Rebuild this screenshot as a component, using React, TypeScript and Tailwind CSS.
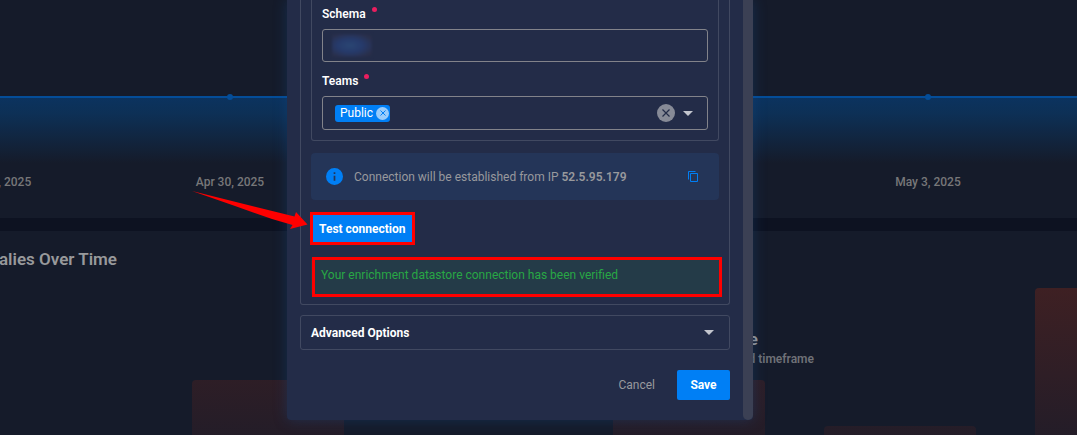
import { useState } from "react";

const points = [
  { x: -3, label: "Apr 29, 2025" },
  { x: 230, label: "Apr 30, 2025" },
  { x: 928, label: "May 3, 2025" },
];

const bars = [
  { x: 192, y: 149 },
  { x: 613, y: 149 },
  { x: 824, y: 195 },
  { x: 1035, y: 57 },
];

function TrendCard() {
  return (
    <section className="h-[218px] shrink-0 bg-[#151b2a]">
      <svg className="block h-full w-full">
        <defs>
          <linearGradient id="area" x1="0" y1="0" x2="0" y2="1">
            <stop offset="0" stopColor="#0b335f" />
            <stop offset="0.25" stopColor="#0d3056" />
            <stop offset="1" stopColor="#151b2a" />
          </linearGradient>
        </defs>
        <rect x="0" y="97" width="100%" height="66" fill="url(#area)" />
        <rect x="0" y="96" width="100%" height="2" fill="#044d98" />
        {points.map((p) => (
          <g key={p.label}>
            <circle cx={p.x} cy="97" r="3" fill="#044d98" />
            <text x={p.x} y="186" textAnchor="middle" fill="#777779" className="text-[12px] font-medium">
              {p.label}
            </text>
          </g>
        ))}
      </svg>
    </section>
  );
}

function AnomaliesCard() {
  return (
    <section className="relative min-h-0 flex-1 overflow-hidden bg-[#151b2a]">
      <svg className="absolute inset-0 h-full w-full">
        <defs>
          <linearGradient id="bar" gradientUnits="userSpaceOnUse" x1="0" y1="57" x2="0" y2="230">
            <stop offset="0" stopColor="#3e2023" />
            <stop offset="1" stopColor="#1f1c29" />
          </linearGradient>
        </defs>
        {bars.map((b) => (
          <rect key={b.x} x={b.x} y={b.y} width="152" height="300" rx="4" fill="url(#bar)" />
        ))}
      </svg>
      <div className="relative flex w-[117px] justify-end pt-4">
        <h2 className="text-[17px] leading-6 font-semibold whitespace-nowrap text-[#98999b]">alies Over Time</h2>
      </div>
      <div className="relative flex w-[814px] flex-col items-end pt-14">
        <p className="mr-14 text-[17px] leading-6 font-semibold text-[#98999b]">e</p>
        <p className="text-[12px] leading-4 font-semibold text-[#6f7177]">d timeframe</p>
      </div>
    </section>
  );
}

function FieldLabel({ htmlFor, children }: { htmlFor: string; children: string }) {
  return (
    <label htmlFor={htmlFor} className="flex gap-1.5 text-[12px] leading-4 font-semibold text-white">
      {children}
      <span className="mt-px size-[5px] rounded-full bg-[#e91e5f]" />
    </label>
  );
}

function Caret() {
  return (
    <svg viewBox="0 0 10 5" className="h-[5px] w-2.5 fill-[#c3c6ce]">
      <path d="M0 0h10L5 5z" />
    </svg>
  );
}

function ConnectionFields() {
  const [schema, setSchema] = useState("");
  return (
    <fieldset className="min-w-0 rounded-b-[3px] border border-t-0 border-[#414961] px-2.5 pt-1.5 pb-2.5">
      <FieldLabel htmlFor="schema">Schema</FieldLabel>
      <div className="relative mt-[7px]">
        <input
          id="schema"
          value={schema}
          onChange={(e) => setSchema(e.target.value)}
          className="block h-[33px] w-full rounded-[3px] border border-[#82838a] bg-transparent px-3 text-[12px] text-white outline-none"
        />
        <span className="pointer-events-none absolute top-[5px] left-2.5 h-[23px] w-10 bg-[radial-gradient(ellipse_at_45%_50%,#2a4673_0%,#263a6b_40%,#292f4a_80%,#232c48_100%)] blur-[1px]" />
      </div>
      <div className="mt-[11px]">
        <FieldLabel htmlFor="teams">Teams</FieldLabel>
      </div>
      <div className="mt-[7px] flex h-[34px] items-center rounded-[3px] border border-[#82838a] pr-3.5 pl-3">
        <span className="flex h-[17px] items-center gap-[3px] rounded-[3px] bg-[#007ff5] pr-px pl-[5px] text-[12px] leading-4 text-white">
          Public
          <button aria-label="Remove Public" className="grid size-[13px] place-items-center rounded-full bg-[#99ccfb]">
            <svg viewBox="0 0 6 6" className="size-1.5 stroke-[#007ff5]">
              <path d="M.5 .5l5 5M5.5 .5l-5 5" />
            </svg>
          </button>
        </span>
        <input id="teams" className="h-4 min-w-0 flex-1 bg-transparent text-[12px] text-white outline-none" />
        <button aria-label="Clear teams" className="mr-2 grid size-[18px] place-items-center rounded-full bg-[#878b97]">
          <svg viewBox="0 0 8 8" className="size-2 stroke-[#232c48]" strokeWidth="1.2">
            <path d="M.5 .5l7 7M7.5 .5l-7 7" />
          </svg>
        </button>
        <Caret />
      </div>
    </fieldset>
  );
}

function Dialog() {
  return (
    <div
      role="dialog"
      aria-label="Enrichment datastore"
      className="relative flex w-[466px] self-start rounded-b-[4px] bg-[#232c48] shadow-[0_0_14px_rgba(24,80,150,0.35)]"
    >
      <div className="min-w-0 flex-1 px-[13px] pb-5">
        <div className="flex flex-col rounded-b-[3px] border border-t-0 border-[#414961] px-2.5 pb-2">
          <ConnectionFields />
          <div className="mt-3 flex h-[47px] items-center rounded-[4px] bg-[#243558] pr-[21px] pl-[15px]">
            <svg viewBox="2 2 20 20" className="size-[17px] fill-[#007ff5]">
              <path d="M12 2a10 10 0 1 0 0 20 10 10 0 0 0 0-20zm1 15h-2v-6h2zm0-8h-2V7h2z" />
            </svg>
            <p className="ml-[11px] flex-1 text-[12px] leading-4 whitespace-nowrap text-[#98999d]">
              Connection will be established from IP <strong className="font-semibold">52.5.95.179</strong>
            </p>
            <button aria-label="Copy IP address">
              <svg viewBox="0 0 10 12" className="h-3 w-2.5 fill-none stroke-[#007ff5]">
                <path d="M2.5 2.500h7v8h-7zM.5 8.500V.5h7" />
              </svg>
            </button>
          </div>
          <div className="relative mt-[13px] self-start">
            <button className="h-[31px] rounded-[3px] bg-[#007ff5] px-2 text-[12px] leading-4 font-bold text-white">
              Test connection
            </button>
            <span className="pointer-events-none absolute -inset-px border-3 border-[#fe0000]" />
            <svg
              viewBox="192 190 116 41"
              className="pointer-events-none absolute top-[-23px] left-[-119px] h-[41px] w-[116px] fill-[#fe0000]"
            >
              <path d="M192 191L240 203 294.500 216.500 296 212 307.500 224.500 290 229 292.500 225 272 219 235 206Z" />
            </svg>
          </div>
          <div className="relative mt-[13px]">
            <p className="h-[39px] rounded-[4px] bg-[#243b48] px-2.5 py-2.5 text-[12px] leading-4 text-[#28a745]">
              Your enrichment datastore connection has been verified
            </p>
            <span className="pointer-events-none absolute top-0 -right-[3px] -bottom-px left-px border-3 border-[#fe0000]" />
          </div>
        </div>
        <button className="mt-2.5 flex h-[35px] w-full items-center justify-between rounded-[3px] border border-[#414961] pr-[15px] pl-2.5 text-[12px] font-bold text-white">
          Advanced Options
          <Caret />
        </button>
        <div className="mt-5 flex justify-end gap-2">
          <button className="h-[30px] px-3.5 text-[12px] text-[#98999d]">Cancel</button>
          <button className="h-[30px] w-[53px] rounded-[2px] bg-[#007ff5] text-[12px] font-bold text-white">Save</button>
        </div>
      </div>
      <div className="w-2.5 rounded-b-full bg-[#3b4054]" />
    </div>
  );
}

export default function App() {
  return (
    <main className="relative h-screen overflow-hidden bg-[#0d1221] font-['Roboto','Liberation_Sans',sans-serif]">
      <div className="flex h-full flex-col gap-[13px]">
        <TrendCard />
        <AnomaliesCard />
      </div>
      <div className="absolute inset-0 flex justify-center pr-[37px]">
        <Dialog />
      </div>
    </main>
  );
}
